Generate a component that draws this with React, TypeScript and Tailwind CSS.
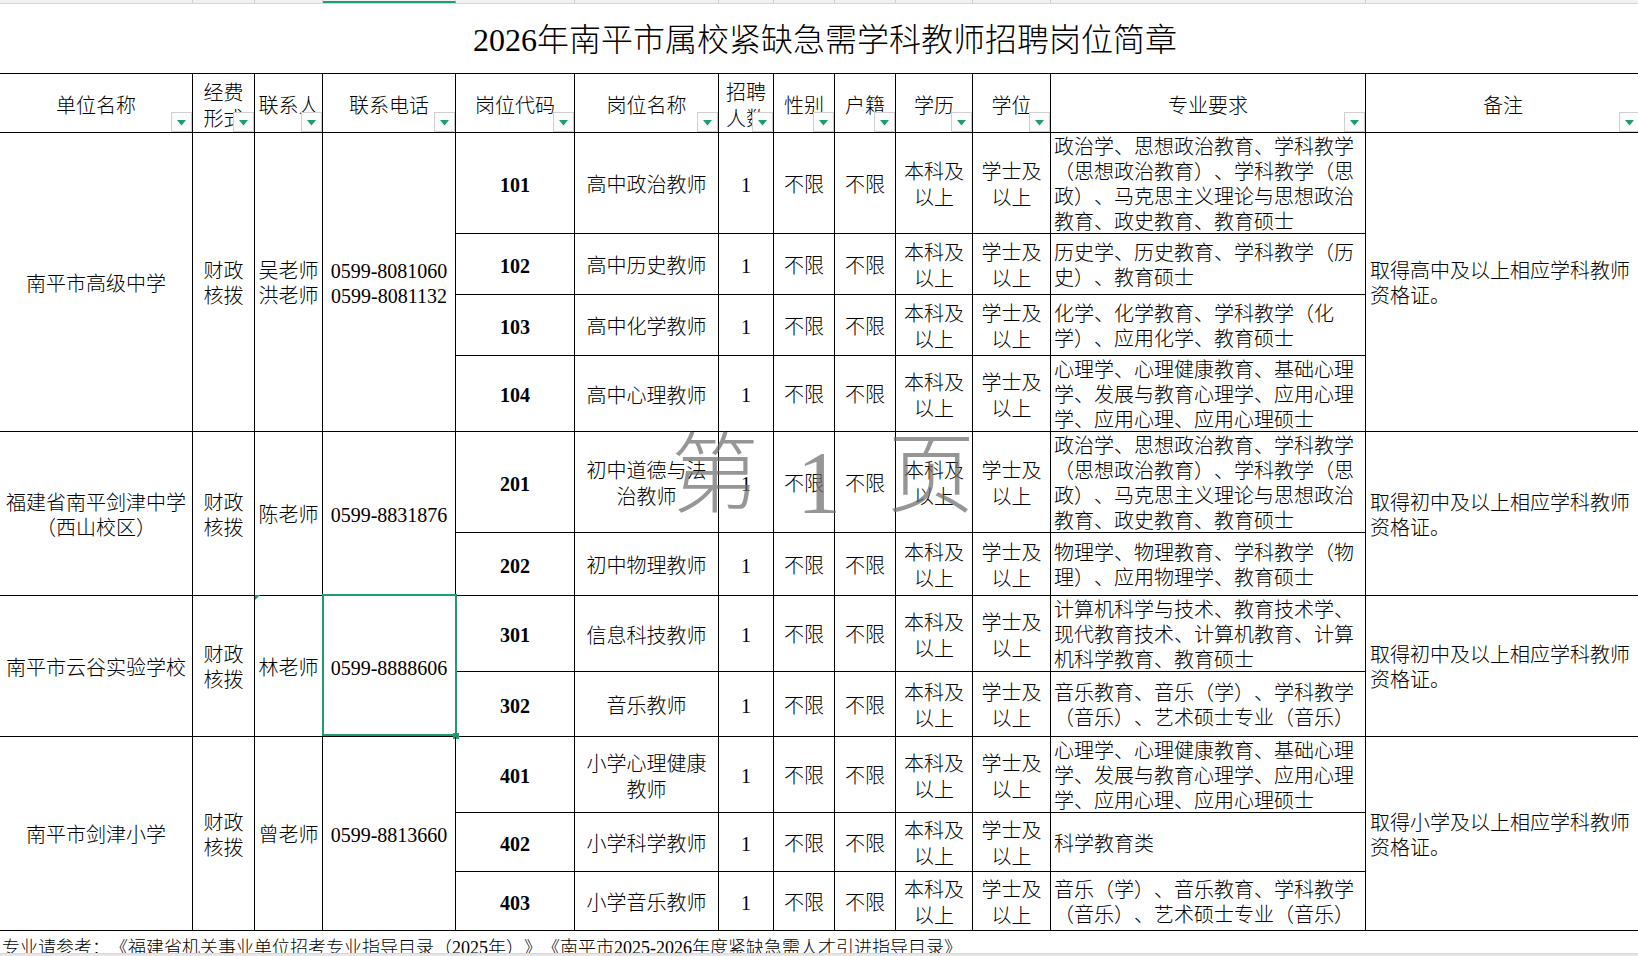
import type { ReactNode } from 'react'

type Post = {
  code: string
  name: string[]
  major: string[]
}

type Group = {
  unit: string[]
  contact: string[]
  phone: string[]
  note: string[]
  posts: Post[]
}

const HEADERS: string[][] = [
  ['单位名称'],
  ['经费', '形式'],
  ['联系人'],
  ['联系电话'],
  ['岗位代码'],
  ['岗位名称'],
  ['招聘', '人数'],
  ['性别'],
  ['户籍'],
  ['学历'],
  ['学位'],
  ['专业要求'],
  ['备注'],
]

const POLITICS = [
  '政治学、思想政治教育、学科教学',
  '（思想政治教育）、学科教学（思',
  '政）、马克思主义理论与思想政治',
  '教育、政史教育、教育硕士',
]

const PSYCHOLOGY = [
  '心理学、心理健康教育、基础心理',
  '学、发展与教育心理学、应用心理',
  '学、应用心理、应用心理硕士',
]

const GROUPS: Group[] = [
  {
    unit: ['南平市高级中学'],
    contact: ['吴老师', '洪老师'],
    phone: ['0599-8081060', '0599-8081132'],
    note: ['取得高中及以上相应学科教师', '资格证。'],
    posts: [
      { code: '101', name: ['高中政治教师'], major: POLITICS },
      { code: '102', name: ['高中历史教师'], major: ['历史学、历史教育、学科教学（历', '史）、教育硕士'] },
      { code: '103', name: ['高中化学教师'], major: ['化学、化学教育、学科教学（化', '学）、应用化学、教育硕士'] },
      { code: '104', name: ['高中心理教师'], major: PSYCHOLOGY },
    ],
  },
  {
    unit: ['福建省南平剑津中学', '（西山校区）'],
    contact: ['陈老师'],
    phone: ['0599-8831876'],
    note: ['取得初中及以上相应学科教师', '资格证。'],
    posts: [
      { code: '201', name: ['初中道德与法', '治教师'], major: POLITICS },
      { code: '202', name: ['初中物理教师'], major: ['物理学、物理教育、学科教学（物', '理）、应用物理学、教育硕士'] },
    ],
  },
  {
    unit: ['南平市云谷实验学校'],
    contact: ['林老师'],
    phone: ['0599-8888606'],
    note: ['取得初中及以上相应学科教师', '资格证。'],
    posts: [
      {
        code: '301',
        name: ['信息科技教师'],
        major: ['计算机科学与技术、教育技术学、', '现代教育技术、计算机教育、计算', '机科学教育、教育硕士'],
      },
      { code: '302', name: ['音乐教师'], major: ['音乐教育、音乐（学）、学科教学', '（音乐）、艺术硕士专业（音乐）'] },
    ],
  },
  {
    unit: ['南平市剑津小学'],
    contact: ['曾老师'],
    phone: ['0599-8813660'],
    note: ['取得小学及以上相应学科教师', '资格证。'],
    posts: [
      { code: '401', name: ['小学心理健康', '教师'], major: PSYCHOLOGY },
      { code: '402', name: ['小学科学教师'], major: ['科学教育类'] },
      { code: '403', name: ['小学音乐教师'], major: ['音乐（学）、音乐教育、学科教学', '（音乐）、艺术硕士专业（音乐）'] },
    ],
  },
]

const SPAN: Record<number, string> = {
  2: 'row-span-2',
  3: 'row-span-3',
  4: 'row-span-4',
}

// column widths of the top sheet strip, same as the grid
const STRIP = ['w-[193px]', 'w-[62px]', 'w-[68px]', 'w-[133px]', 'w-[119px]', 'w-[144px]', 'w-[55px]', 'w-[61px]', 'w-[61px]', 'w-[77px]', 'w-[78px]', 'w-[315px]', 'w-[275px]']

function Lines({ lines }: { lines: string[] }) {
  return (
    <div className="whitespace-nowrap">
      {lines.map((l, i) => (
        <div key={i}>{l}</div>
      ))}
    </div>
  )
}

type CellProps = {
  children: ReactNode
  className?: string
}

function Cell({ children, className = '' }: CellProps) {
  return (
    <div className={`flex items-center border-r border-b border-black pt-[4px] ${className}`}>{children}</div>
  )
}

function FilterButton() {
  return (
    <span className="absolute right-0 bottom-0 flex h-[20px] w-[21px] items-center justify-center border border-[#cfcfcf] bg-[#fbfbfb] pt-[2px]">
      <svg width="9" height="6" viewBox="0 0 9 6">
        <polygon points="0,0 9,0 4.5,5.5" fill="#1f9b6e" />
      </svg>
    </span>
  )
}

export default function App() {
  return (
    <div className="relative h-[956px] w-[1638px] overflow-hidden bg-white text-black [font-family:'Liberation_Serif','Noto_Sans_CJK_SC',serif] [text-spacing-trim:space-all]">
      {/* sheet column strip */}
      <div className="flex h-[4px] border-b border-[#d6d6d6] bg-[#f1f1f1]">
        {STRIP.map((w, i) => (
          <div key={i} className={`${w} shrink-0 border-r border-[#d0d0d0] ${i === 3 ? 'border-b-2 border-b-[#1f9b6e]' : ''}`} />
        ))}
      </div>

      <div className="flex h-[69px] items-center justify-center pt-[3px] pl-[12px] text-[32px] font-light">
        2026年南平市属校紧缺急需学科教师招聘岗位简章
      </div>

      <div className="grid w-[1641px] grid-cols-[193px_62px_68px_133px_119px_144px_55px_61px_61px_77px_78px_315px_275px] grid-rows-[59px_101px_61px_61px_76px_101px_63px_76px_65px_76px_59px_59px] border-t border-black text-[20px] leading-[25px] font-light">
        {HEADERS.map((h, i) => (
          <Cell key={i} className="relative justify-center overflow-hidden pt-[6px] text-center leading-[26px]">
            <Lines lines={h} />
            <FilterButton />
          </Cell>
        ))}

        {GROUPS.map((g, gi) => {
          const span = SPAN[g.posts.length]
          return g.posts.map((p, pi) => (
            <Post key={p.code} first={pi === 0} group={g} post={p} span={span} selected={gi === 2} />
          ))
        })}
      </div>

      <div className="h-[22px] overflow-hidden pt-[7px] pl-[2px] text-[18px] leading-[20px] font-light whitespace-nowrap">
        专业请参考：《福建省机关事业单位招考专业指导目录（2025年）》《南平市2025-2026年度紧缺急需人才引进指导目录》
      </div>
      <div className="h-[3px] border-t border-[#d8d8d8] bg-[#e6e6e6]" />

      {/* page watermark */}
      <div className="pointer-events-none absolute top-0 left-0 font-light text-[rgba(110,110,110,0.72)]">
        <span className="absolute top-[432px] left-[671px] text-[88px] leading-none">第</span>
        <span className="absolute top-[439px] left-[797px] text-[88px] leading-none">1</span>
        <span className="absolute top-[432px] left-[887px] text-[88px] leading-none">页</span>
      </div>
    </div>
  )
}

type PostProps = {
  first: boolean
  group: Group
  post: Post
  span: string
  selected: boolean
}

function Post({ first, group, post, span, selected }: PostProps) {
  return (
    <>
      {first ? (
        <>
          <Cell className={`${span} justify-center text-center`}>
            <Lines lines={group.unit} />
          </Cell>
          <Cell className={`${span} justify-center text-center`}>
            <Lines lines={['财政', '核拨']} />
          </Cell>
          <Cell className={`${span} relative justify-center text-center`}>
            <Lines lines={group.contact} />
            {selected ? (
              <svg className="absolute -top-[1px] left-0" width="5" height="5" viewBox="0 0 5 5">
                <polygon points="0,0 5,0 0,5" fill="#1f9b6e" />
              </svg>
            ) : null}
          </Cell>
          <Cell className={`${span} relative justify-center text-center`}>
            <Lines lines={group.phone} />
            {selected ? (
              <>
                <span className="absolute -top-[2px] -right-[2px] bottom-0 -left-[1px] border-2 border-[#1f9b6e]" />
                <span className="absolute -right-[4px] -bottom-[3px] h-[6px] w-[6px] bg-[#1f9b6e]" />
              </>
            ) : null}
          </Cell>
        </>
      ) : null}
      <Cell className="justify-center text-center font-bold">{post.code}</Cell>
      <Cell className="justify-center text-center leading-[26px]">
        <Lines lines={post.name} />
      </Cell>
      <Cell className="justify-center text-center">1</Cell>
      <Cell className="justify-center text-center">不限</Cell>
      <Cell className="justify-center text-center">不限</Cell>
      <Cell className="justify-center text-center leading-[26px]">
        <Lines lines={['本科及', '以上']} />
      </Cell>
      <Cell className="justify-center text-center leading-[26px]">
        <Lines lines={['学士及', '以上']} />
      </Cell>
      <Cell className="justify-start pl-[3px] text-left">
        <Lines lines={post.major} />
      </Cell>
      {first ? (
        <Cell className={`${span} justify-start pl-[4px] text-left`}>
          <Lines lines={group.note} />
        </Cell>
      ) : null}
    </>
  )
}
